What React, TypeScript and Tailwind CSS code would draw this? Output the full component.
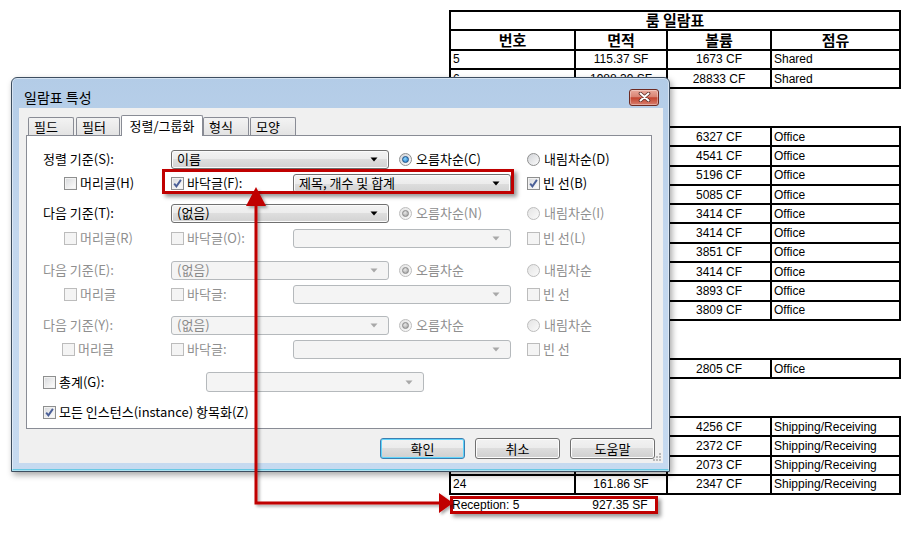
import React from "react";

type Row = [string, string, string, string];

const groupA: Row[] = [
  ["5", "115.37 SF", "1673 CF", "Shared"],
  ["6", "1988.39 SF", "28833 CF", "Shared"],
];
const groupB: Row[] = [
  ["7", "441.49 SF", "6327 CF", "Office"],
  ["8", "316.87 SF", "4541 CF", "Office"],
  ["9", "362.58 SF", "5196 CF", "Office"],
  ["10", "354.84 SF", "5085 CF", "Office"],
  ["11", "238.25 SF", "3414 CF", "Office"],
  ["12", "238.25 SF", "3414 CF", "Office"],
  ["13", "268.76 SF", "3851 CF", "Office"],
  ["14", "238.25 SF", "3414 CF", "Office"],
  ["15", "271.66 SF", "3893 CF", "Office"],
  ["16", "265.80 SF", "3809 CF", "Office"],
];
const groupC: Row[] = [["17", "195.72 SF", "2805 CF", "Office"]];
const groupD: Row[] = [
  ["21", "297.00 SF", "4256 CF", "Shipping/Receiving"],
  ["22", "165.51 SF", "2372 CF", "Shipping/Receiving"],
  ["23", "144.67 SF", "2073 CF", "Shipping/Receiving"],
  ["24", "161.86 SF", "2347 CF", "Shipping/Receiving"],
];

function DataRow({ r, first }: { r: Row; first?: boolean }) {
  return (
    <div className={first ? "flex h-[17.3px]" : "flex h-[19.3px] border-t-2 border-black"}>
      <div className="w-[123px] pl-[2px] flex items-center">{r[0]}</div>
      <div className="w-[92px] border-l-2 border-black flex items-center justify-center">{r[1]}</div>
      <div className="w-[104px] border-l-2 border-black flex items-center justify-center">{r[2]}</div>
      <div className="flex-1 border-l-2 border-black pl-[2px] flex items-center">{r[3]}</div>
    </div>
  );
}

function Group({ rows, className }: { rows: Row[]; className?: string }) {
  return (
    <div className={"border-2 border-black w-[452px] " + (className ?? "")}>
      {rows.map((r, i) => (
        <DataRow key={i} r={r} first={i === 0} />
      ))}
    </div>
  );
}

function Schedule() {
  return (
    <div className="pl-[449px] pt-[10px] text-[12px] text-black font-['Liberation_Sans',Arial,sans-serif]">
      <div className="border-2 border-black w-[452px]">
        <div className="flex h-[17.3px] items-center justify-center font-bold text-[15px] font-['Noto_Sans_CJK_KR',sans-serif]">
          룸 일람표
        </div>
        <div className="flex h-[19.3px] border-t-2 border-black font-bold text-[15px] font-['Noto_Sans_CJK_KR',sans-serif]">
          <div className="w-[123px] flex items-center justify-center">번호</div>
          <div className="w-[92px] border-l-2 border-black flex items-center justify-center">면적</div>
          <div className="w-[104px] border-l-2 border-black flex items-center justify-center">볼륨</div>
          <div className="flex-1 border-l-2 border-black flex items-center justify-center">점유</div>
        </div>
        {groupA.map((r, i) => (
          <DataRow key={i} r={r} />
        ))}
      </div>
      <Group rows={groupB} className="mt-[36.8px]" />
      <Group rows={groupC} className="mt-[37px]" />
      <Group rows={groupD} className="mt-[36.7px]" />
      <div className="flex h-[19px] w-[452px]">
        <div className="w-[125px] pl-[3px] flex items-center">Reception: 5</div>
        <div className="w-[92px] flex items-center justify-center">927.35 SF</div>
      </div>
    </div>
  );
}

function Check({ checked, disabled }: { checked?: boolean; disabled?: boolean }) {
  return (
    <span
      className={
        disabled
          ? "inline-flex w-[13px] h-[13px] shrink-0 items-center justify-center border border-[#bcbcbc] bg-[#f4f4f4]"
          : "inline-flex w-[13px] h-[13px] shrink-0 items-center justify-center border border-[#8e8f8f] bg-[linear-gradient(135deg,#d6d8db_0%,#f4f4f4_70%,#ffffff_100%)] shadow-[inset_0_0_0_1px_#f2f2f2]"
      }
    >
      {checked && (
        <svg width="9" height="9" viewBox="0 0 9 9">
          <path d="M1.2 4.6 L3.4 7.4 L7.9 0.9" stroke="#4a5f97" strokeWidth="1.9" fill="none" />
        </svg>
      )}
    </span>
  );
}

function CheckL({
  label,
  checked,
  disabled,
  className,
}: {
  label: string;
  checked?: boolean;
  disabled?: boolean;
  className?: string;
}) {
  return (
    <span className={"inline-flex items-center gap-[3px] shrink-0 " + (className ?? "")}>
      <Check checked={checked} disabled={disabled} />
      <span className={disabled ? "text-[#8f8f8f]" : "text-black"}>{label}</span>
    </span>
  );
}

function Radio({
  label,
  selected,
  disabled,
  className,
}: {
  label: string;
  selected?: boolean;
  disabled?: boolean;
  className?: string;
}) {
  return (
    <span className={"inline-flex items-center gap-[4px] shrink-0 " + (className ?? "")}>
      <span
        className={
          disabled
            ? "inline-flex w-[13px] h-[13px] rounded-full items-center justify-center border border-[#bdbdbd] bg-[linear-gradient(135deg,#e4e4e4,#fafafa)]"
            : "inline-flex w-[13px] h-[13px] rounded-full items-center justify-center border border-[#8e8f8f] bg-[linear-gradient(135deg,#d2d4d8,#fbfbfb)]"
        }
      >
        {selected &&
          (disabled ? (
            <span className="w-[7px] h-[7px] rounded-full border border-[#8a8a8a] bg-[radial-gradient(circle_at_40%_35%,#e8e8e8,#9a9a9a)]" />
          ) : (
            <span className="w-[7px] h-[7px] rounded-full border border-[#1d4f86] bg-[radial-gradient(circle_at_40%_35%,#8fd8ff,#1a72c2)]" />
          ))}
      </span>
      <span className={disabled ? "text-[#8f8f8f]" : "text-black"}>{label}</span>
    </span>
  );
}

function Arrow({ color }: { color: string }) {
  return (
    <svg width="8" height="5" viewBox="0 0 8 5">
      <path d="M0.5 0.5 H7.5 L4 4.5 Z" fill={color} />
    </svg>
  );
}

function Combo({ text, disabled, className }: { text?: string; disabled?: boolean; className?: string }) {
  return (
    <div
      className={
        (disabled
          ? "h-[19px] rounded-[3px] border border-[#b5b9bc] bg-[#f4f4f4] text-[#8a8a8a] "
          : "h-[19px] rounded-[3px] border border-[#707070] bg-[linear-gradient(#f3f3f3_0%,#ececec_50%,#dedede_50%,#d2d2d2_100%)] shadow-[inset_0_0_0_1px_#fbfbfb] text-black ") +
        "flex items-center justify-between pl-[5px] pr-[10px] shrink-0 " +
        (className ?? "")
      }
    >
      <span>{text ?? ""}</span>
      <Arrow color={disabled ? "#a8a8a8" : "#000000"} />
    </div>
  );
}

function Btn({ label, def }: { label: string; def?: boolean }) {
  return (
    <div
      className={
        def
          ? "w-[85px] h-[21px] rounded-[3px] border border-[#3c7fb1] shadow-[inset_0_0_0_1px_#5fd4fb] bg-[linear-gradient(#f2f2f2_0%,#ebebeb_50%,#dddddd_50%,#cfcfcf_100%)] flex items-center justify-center text-black"
          : "w-[85px] h-[21px] rounded-[3px] border border-[#707070] shadow-[inset_0_0_0_1px_#fcfcfc] bg-[linear-gradient(#f2f2f2_0%,#ebebeb_50%,#dddddd_50%,#cfcfcf_100%)] flex items-center justify-center text-black"
      }
    >
      {label}
    </div>
  );
}

function Tab({ label, className }: { label: string; className: string }) {
  return (
    <div
      className={
        "h-[18px] border border-b-0 border-[#898c95] bg-[linear-gradient(#f3f3f3,#e3e3e3)] rounded-t-[2px] flex items-center pl-[5px] " +
        className
      }
    >
      {label}
    </div>
  );
}

function Dialog() {
  return (
    <div className="absolute left-[11px] top-[77px] w-[659px] h-[395px] rounded-t-[6px] border border-[#3d4e60] bg-[linear-gradient(#b3cce7_0%,#c3d7ee_40%,#c6daf0_100%)] shadow-[2px_3px_6px_rgba(0,0,0,0.35),inset_0_0_0_1px_rgba(255,255,255,0.45),inset_0_-2px_0_#69c9e4] flex flex-col pl-[7px] pr-[6px] pb-[8px] text-[13px] font-['Noto_Sans_CJK_KR',sans-serif]">
      <div className="h-[30px] pt-[8px] flex items-center justify-between">
        <span className="pl-[5px] text-[14px] text-black">일람표 특성</span>
        <div className="mr-[4px] w-[30px] h-[17px] rounded-[3px] border border-[#6e2b22] bg-[linear-gradient(#e9a99c_0%,#d98474_45%,#c3442f_52%,#d77e6e_100%)] shadow-[inset_0_0_0_1px_rgba(255,255,255,0.35)] flex items-center justify-center">
          <svg width="13" height="10" viewBox="0 0 13 10">
            <path d="M2.5 1.5 L10.5 8.5 M10.5 1.5 L2.5 8.5" stroke="#5a2a24" strokeWidth="3.6" strokeLinecap="round" />
            <path d="M2.5 1.5 L10.5 8.5 M10.5 1.5 L2.5 8.5" stroke="#ffffff" strokeWidth="2" strokeLinecap="round" />
          </svg>
        </div>
      </div>
      <div className="relative flex-1 bg-[#f0f0f0] pt-[9px] pl-[7px] flex flex-col">
        <div className="relative z-10 flex items-end h-[18px] pl-[2px]">
          <Tab label="필드" className="w-[46px]" />
          <Tab label="필터" className="ml-[2px] w-[44px]" />
          <div className="relative top-[1px] ml-[1px] w-[82px] h-[21px] border border-b-0 border-[#898c95] bg-white rounded-t-[2px] flex items-center justify-center pb-[1px]">
            정렬/그룹화
          </div>
          <Tab label="형식" className="w-[46px]" />
          <Tab label="모양" className="ml-[1px] w-[46px]" />
        </div>
        <div className="relative w-[626px] h-[294px] bg-white border border-[#898c95] pt-[13px] flex flex-col">
          <div className="flex items-center h-[20px] pl-[16px]">
            <span className="w-[128px] shrink-0">정렬 기준(S):</span>
            <Combo className="w-[218px]" text="이름" />
            <Radio className="ml-[10px] w-[128px]" selected label="오름차순(C)" />
            <Radio label="내림차순(D)" />
          </div>
          <div className="flex items-center h-[20px] mt-[4px] pl-[37px]">
            <CheckL className="w-[107px]" label="머리글(H)" />
            <CheckL className="w-[122px]" checked label="바닥글(F):" />
            <Combo className="w-[218px]" text="제목, 개수 및 합계" />
            <CheckL className="ml-[16px]" checked label="빈 선(B)" />
          </div>
          <div className="flex items-center h-[20px] mt-[10px] pl-[16px]">
            <span className="w-[128px] shrink-0">다음 기준(T):</span>
            <Combo className="w-[218px]" text="(없음)" />
            <Radio className="ml-[10px] w-[128px]" selected disabled label="오름차순(N)" />
            <Radio disabled label="내림차순(I)" />
          </div>
          <div className="flex items-center h-[20px] mt-[5px] pl-[37px]">
            <CheckL className="w-[107px]" disabled label="머리글(R)" />
            <CheckL className="w-[122px]" disabled label="바닥글(O):" />
            <Combo className="w-[218px]" disabled />
            <CheckL className="ml-[16px]" disabled label="빈 선(L)" />
          </div>
          <div className="flex items-center h-[20px] mt-[12px] pl-[16px]">
            <span className="w-[128px] shrink-0 text-[#8f8f8f]">다음 기준(E):</span>
            <Combo className="w-[218px]" disabled text="(없음)" />
            <Radio className="ml-[10px] w-[128px]" selected disabled label="오름차순" />
            <Radio disabled label="내림차순" />
          </div>
          <div className="flex items-center h-[20px] mt-[4px] pl-[37px]">
            <CheckL className="w-[107px]" disabled label="머리글" />
            <CheckL className="w-[122px]" disabled label="바닥글:" />
            <Combo className="w-[218px]" disabled />
            <CheckL className="ml-[16px]" disabled label="빈 선" />
          </div>
          <div className="flex items-center h-[20px] mt-[11px] pl-[16px]">
            <span className="w-[128px] shrink-0 text-[#8f8f8f]">다음 기준(Y):</span>
            <Combo className="w-[218px]" disabled text="(없음)" />
            <Radio className="ml-[10px] w-[128px]" selected disabled label="오름차순" />
            <Radio disabled label="내림차순" />
          </div>
          <div className="flex items-center h-[20px] mt-[4px] pl-[35px]">
            <CheckL className="w-[109px]" disabled label="머리글" />
            <CheckL className="w-[122px]" disabled label="바닥글:" />
            <Combo className="w-[218px]" disabled />
            <CheckL className="ml-[16px]" disabled label="빈 선" />
          </div>
          <div className="flex items-center h-[20px] mt-[13px] pl-[16px]">
            <CheckL className="w-[163px]" label="총계(G):" />
            <Combo className="w-[218px] h-[20px]" disabled />
          </div>
          <div className="flex items-center h-[20px] mt-[10px] pl-[16px]">
            <CheckL checked label="모든 인스턴스(instance) 항목화(Z)" />
          </div>
          <div className="absolute left-[135px] top-[33px] w-[352px] h-[25px] border-[3px] border-[#c00000] shadow-[3px_3px_4px_rgba(0,0,0,0.4)] pointer-events-none" />
        </div>
        <div className="mt-[9px] flex justify-end gap-[10px] pr-[8px]">
          <Btn label="확인" def />
          <Btn label="취소" />
          <Btn label="도움말" />
        </div>
        <svg className="absolute right-[1px] bottom-[1px]" width="10" height="10" viewBox="0 0 10 10">
          <g fill="#b8b8b8">
            <rect x="7" y="1" width="2" height="2" />
            <rect x="4" y="4" width="2" height="2" />
            <rect x="7" y="4" width="2" height="2" />
            <rect x="1" y="7" width="2" height="2" />
            <rect x="4" y="7" width="2" height="2" />
            <rect x="7" y="7" width="2" height="2" />
          </g>
        </svg>
      </div>
    </div>
  );
}

export default function App() {
  return (
    <div className="relative w-[913px] h-[548px] bg-white overflow-hidden">
      <Schedule />
      <div className="absolute left-[450px] top-[496px] w-[208px] h-[18px] border-[3px] border-[#c00000] shadow-[3px_3px_4px_rgba(0,0,0,0.4)]" />
      <Dialog />
      <svg className="absolute left-0 top-0 pointer-events-none" width="913" height="548" viewBox="0 0 913 548">
        <defs>
          <filter id="arrowShadow" x="-20%" y="-20%" width="140%" height="140%">
            <feDropShadow dx="2" dy="2" stdDeviation="1.5" floodColor="#000000" floodOpacity="0.35" />
          </filter>
        </defs>
        <g filter="url(#arrowShadow)">
          <path d="M256 204 V503 H441" stroke="#c00000" strokeWidth="3" fill="none" />
          <polygon points="256,187 246,206 266,206" fill="#c00000" />
          <polygon points="453,503 439,493 439,513" fill="#c00000" />
        </g>
      </svg>
    </div>
  );
}
